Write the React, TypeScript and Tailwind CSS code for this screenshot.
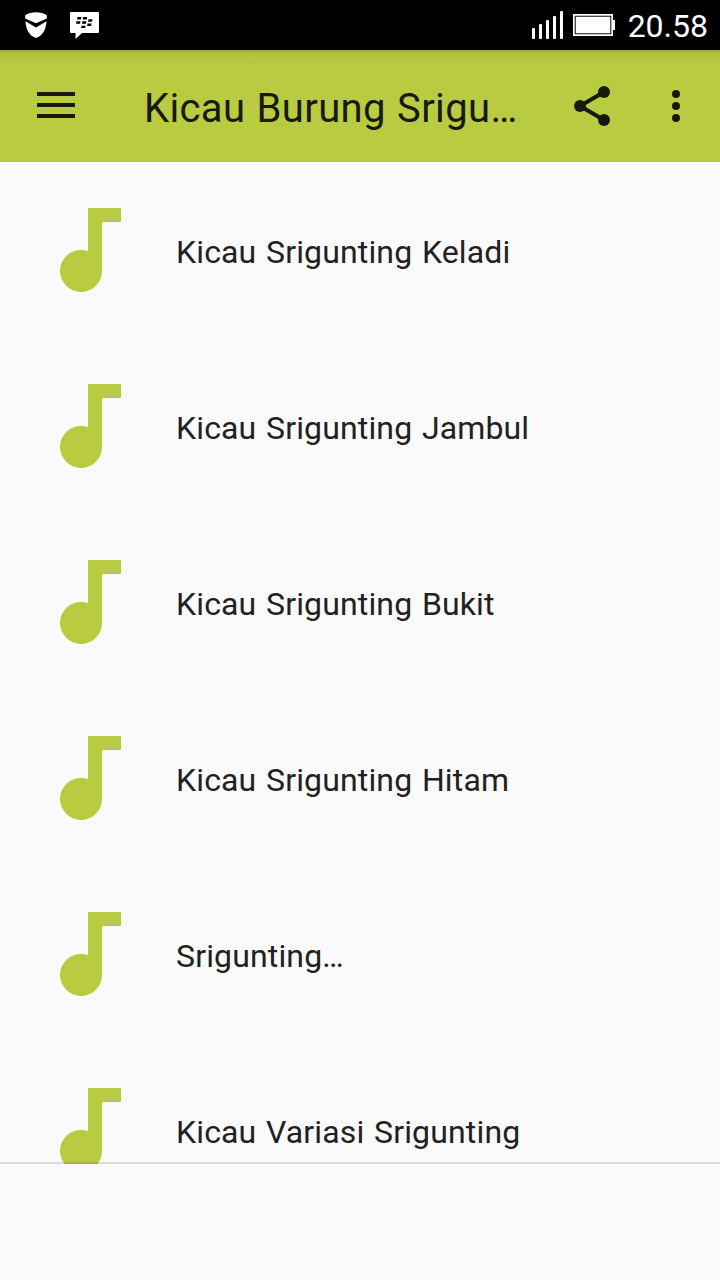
import React from 'react';

const songs = [
  'Kicau Srigunting Keladi',
  'Kicau Srigunting Jambul',
  'Kicau Srigunting Bukit',
  'Kicau Srigunting Hitam',
  'Srigunting…',
  'Kicau Variasi Srigunting',
];

const ShieldIcon = () => (
  <svg width="24" height="28" viewBox="0 0 24 28" fill="#fff">
    <path d="M1.200 3.200C4.500 1 8 .2 12 .2s7.500.8 10.800 3v3.300L12 11.200 1.200 6.500z" />
    <path d="M1.500 9.200 12 15.600l10.500-6.400C22.200 17.500 18.500 24 12 26 5.500 24 1.800 17.500 1.500 9.200z" />
  </svg>
);

const MessengerIcon = () => (
  <svg width="29" height="28" viewBox="0 0 29 28">
    <path d="M1 0h27a1 1 0 0 1 1 1v19a1 1 0 0 1-1 1H12l-6.500 6V21H1a1 1 0 0 1-1-1V1a1 1 0 0 1 1-1z" fill="#fff" />
    <g fill="#000">
      <path d="M7.500 5h4l-.5 2.400H7z" />
      <path d="M13.200 5h4l-.5 2.400h-4z" />
      <path d="M6.500 9.300h4l-.5 2.500H6z" />
      <path d="M12.400 9.300h4l-.5 2.500h-4z" />
      <path d="M18.500 7.300h4L22 9.700h-4z" />
      <path d="M17.600 11.500h4l-.5 2.400h-4z" />
      <path d="M11.600 13.700h4l-.5 2.400h-4z" />
    </g>
  </svg>
);

const SignalIcon = () => (
  <svg width="31" height="28" viewBox="0 0 31 28" fill="#fff">
    <rect x="0" y="17" width="3" height="11" rx="1" />
    <rect x="7" y="13" width="3" height="15" rx="1" />
    <rect x="14" y="9" width="3" height="19" rx="1" />
    <rect x="21" y="5" width="3" height="23" rx="1" />
    <rect x="28" y="0" width="3" height="28" rx="1" />
  </svg>
);

const BatteryIcon = () => (
  <svg width="42" height="22" viewBox="0 0 42 22" fill="#fff">
    <path d="M0 0h40v6h2v10h-2v6H0zM1.700 1.700v18.600h36.600V1.700z" fillRule="evenodd" />
    <rect x="2.700" y="2.700" width="34.600" height="16.600" />
  </svg>
);

const ShareIcon = () => (
  <svg width="36" height="40" viewBox="0 0 36 40" fill="#171a08">
    <path d="M30 6 6 20l24 14" fill="none" stroke="#171a08" strokeWidth="4" />
    <circle cx="30" cy="6" r="6" />
    <circle cx="6" cy="20" r="6" />
    <circle cx="30" cy="34" r="6" />
  </svg>
);

const MoreIcon = () => (
  <svg width="8" height="32" viewBox="0 0 8 32" fill="#171a08">
    <circle cx="4" cy="4" r="4" />
    <circle cx="4" cy="16" r="4" />
    <circle cx="4" cy="28" r="4" />
  </svg>
);

const NoteIcon = () => (
  <svg width="61" height="84" viewBox="0 0 61 84" fill="#b9cc41" className="shrink-0">
    <path d="M28 0h33v14H42v49a21 21 0 1 1-14-19.800z" />
  </svg>
);

const App = () => {
  return (
    <div className="w-[720px] h-[1280px] flex flex-col overflow-hidden bg-[#fafafa] font-['Roboto',sans-serif]">

      <div className="h-[50px] shrink-0 flex items-center bg-black pl-6 pr-3">
        <div className="mt-0.5 flex items-center gap-[22px]">
          <ShieldIcon />
          <MessengerIcon />
        </div>
        <div className="ml-auto flex items-center gap-2.5">
          <SignalIcon />
          <BatteryIcon />
          <span className="ml-[3px] mt-0.5 text-[32px] leading-[48px] text-white">20.58</span>
        </div>
      </div>

      <div className="h-28 shrink-0 flex items-center bg-linear-to-b from-[#9dae38] via-[#b3c63f] via-4% to-[#b9cc41] to-18% pl-[37px] pr-10">
        <div className="w-[38px] mb-0.5 flex flex-col gap-[7px]">
          <div className="h-1 bg-[#171a08]"></div>
          <div className="h-1 bg-[#171a08]"></div>
          <div className="h-1 bg-[#171a08]"></div>
        </div>
        <h1 className="ml-[69px] mt-1.5 text-[40px] leading-[48px] tracking-[0.35px] [word-spacing:1px] whitespace-nowrap text-[#171a08]">Kicau Burung Srigu…</h1>
        <div className="ml-auto flex items-center gap-[62px]">
          <ShareIcon />
          <MoreIcon />
        </div>
      </div>

      <div className="relative h-[1002px] shrink-0 overflow-hidden">
        {songs.map((song) => (
          <div key={song} className="h-44 flex items-center gap-[55px] pl-[60px]">
            <NoteIcon />
            <p className="mt-1 text-[32px] leading-10 tracking-[0.15px] [word-spacing:1.5px] whitespace-nowrap text-[#212121]">{song}</p>
          </div>
        ))}
        <div className="absolute inset-x-0 bottom-0 h-0.5 bg-black/12"></div>
      </div>

    </div>
  );
}

export default App;
